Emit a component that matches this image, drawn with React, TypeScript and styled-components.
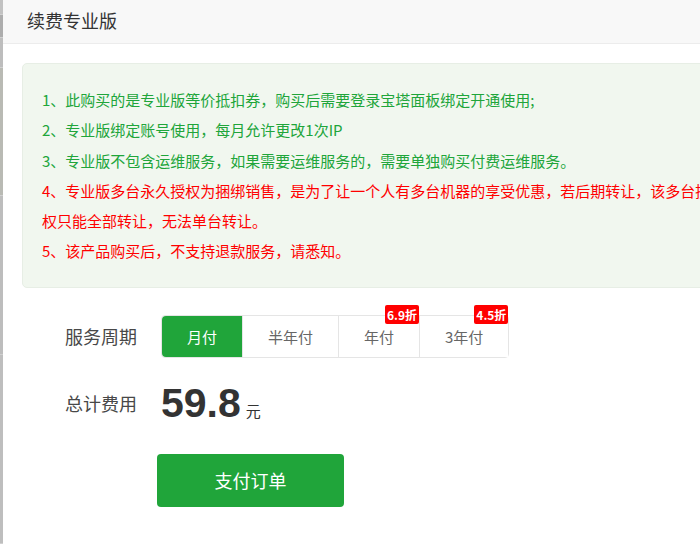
import React, { useState } from "react";
import styled, { createGlobalStyle } from "styled-components";

const GlobalStyle = createGlobalStyle`
  html, body {
    margin: 0;
    padding: 0;
    background: #ffffff;
    overflow: hidden;
  }
  body {
    font-family: "Noto Sans CJK SC", "Noto Sans", sans-serif;
  }
`;

const Page = styled("div")`
  display: flex;
  width: 700px;
  height: 544px;
  overflow: hidden;
`;

const Backdrop = styled("div")`
  flex: none;
  width: 3px;
  display: flex;
  flex-direction: column;
  background: #bdbdbd;
  > div {
    border-bottom: 1px solid #d0d0d0;
  }
`;

const BackdropPart = styled("div")<{ $h: number; $bg: string }>`
  height: ${(p) => p.$h}px;
  background: ${(p) => p.$bg};
`;

const Modal = styled("div")`
  flex: none;
  width: 760px;
  background: #ffffff;
`;

const Header = styled("div")`
  height: 43px;
  line-height: 40px;
  padding-left: 24px;
  background: #f8f8f8;
  border-bottom: 1px solid #ececec;
  font-size: 18px;
  color: #333333;
`;

const Body = styled("div")`
  padding: 19px 19px 0 19px;
`;

const Notice = styled("div")`
  background: #f1f7ef;
  border: 1px solid #e7eee5;
  border-radius: 5px;
  padding: 21px 25px 20px 19px;
  font-size: 15px;
  line-height: 30.3px;
`;

const NoticeLine = styled("p")<{ $warn?: boolean }>`
  margin: 0;
  color: ${(p) => (p.$warn ? "#ff0000" : "#20a53a")};
`;

const Row = styled("div")`
  display: flex;
  align-items: center;
  padding-left: 62px;
`;

const PeriodRow = styled(Row)`
  margin-top: 27px;
`;

const TotalRow = styled(Row)`
  margin-top: 20px;
  height: 50px;
`;

const Label = styled("div")`
  flex: none;
  width: 96px;
  font-size: 18px;
  color: #484848;
`;

const Tabs = styled("div")`
  display: flex;
  border: 1px solid #e5e5e5;
  border-radius: 4px;
`;

const Tab = styled("div")<{ $active?: boolean }>`
  position: relative;
  height: 41px;
  line-height: 41px;
  padding: 0 25px;
  font-size: 15px;
  cursor: pointer;
  color: ${(p) => (p.$active ? "#ffffff" : "#666666")};
  background: ${(p) => (p.$active ? "#20a53a" : "#ffffff")};
  & + & {
    border-left: 1px solid #e5e5e5;
  }
  &:first-child {
    border-radius: 4px 0 0 4px;
  }
`;

const Badge = styled("span")`
  position: absolute;
  top: -11px;
  right: 0;
  height: 19px;
  line-height: 19px;
  padding: 0 2px;
  border-radius: 2px;
  background: #ff0000;
  color: #ffffff;
  font-size: 12px;
  font-weight: 700;
`;

const Price = styled("div")`
  display: flex;
  align-items: baseline;
  gap: 5px;
  color: #333333;
`;

const Amount = styled("span")`
  font-family: "Liberation Sans", Arial, sans-serif;
  font-size: 41px;
  font-weight: 700;
  line-height: 50px;
`;

const Unit = styled("span")`
  font-size: 15px;
`;

const PayButton = styled("button")`
  display: block;
  margin: 26px 0 0 154px;
  width: 187px;
  height: 53px;
  border: none;
  border-radius: 4px;
  background: #20a53a;
  color: #ffffff;
  font-family: inherit;
  font-size: 18px;
  cursor: pointer;
`;

const notes = [
  { text: "1、此购买的是专业版等价抵扣券，购买后需要登录宝塔面板绑定开通使用;", warn: false },
  { text: "2、专业版绑定账号使用，每月允许更改1次IP", warn: false },
  { text: "3、专业版不包含运维服务，如果需要运维服务的，需要单独购买付费运维服务。", warn: false },
  {
    text: "4、专业版多台永久授权为捆绑销售，是为了让一个人有多台机器的享受优惠，若后期转让，该多台授权只能全部转让，无法单台转让。",
    warn: true,
  },
  { text: "5、该产品购买后，不支持退款服务，请悉知。", warn: true },
];

const periods = [
  { name: "月付", price: "59.8" },
  { name: "半年付", price: "358.8" },
  { name: "年付", price: "495.2", badge: "6.9折" },
  { name: "3年付", price: "968.8", badge: "4.5折" },
];

const App = () => {
  const [active, setActive] = useState(0);

  return (
    <Page>
      <GlobalStyle />
      <Backdrop>
        <BackdropPart $h={14} $bg="#c2c2c2" />
        <BackdropPart $h={22} $bg="#adadad" />
        <BackdropPart $h={30} $bg="#bdbdbd" />
        <BackdropPart $h={128} $bg="#b9bab4" />
        <BackdropPart $h={160} $bg="#bdbdbd" />
        <BackdropPart $h={190} $bg="#bebebe" />
      </Backdrop>
      <Modal>
        <Header>续费专业版</Header>
        <Body>
          <Notice>
            {notes.map((n, i) => (
              <NoticeLine key={i} $warn={n.warn}>
                {n.text}
              </NoticeLine>
            ))}
          </Notice>
        </Body>
        <PeriodRow>
          <Label>服务周期</Label>
          <Tabs>
            {periods.map((p, i) => (
              <Tab key={p.name} $active={i === active} onClick={() => setActive(i)}>
                {p.name}
                {p.badge && <Badge>{p.badge}</Badge>}
              </Tab>
            ))}
          </Tabs>
        </PeriodRow>
        <TotalRow>
          <Label>总计费用</Label>
          <Price>
            <Amount>{periods[active].price}</Amount>
            <Unit>元</Unit>
          </Price>
        </TotalRow>
        <PayButton>支付订单</PayButton>
      </Modal>
    </Page>
  );
};

export default App;
